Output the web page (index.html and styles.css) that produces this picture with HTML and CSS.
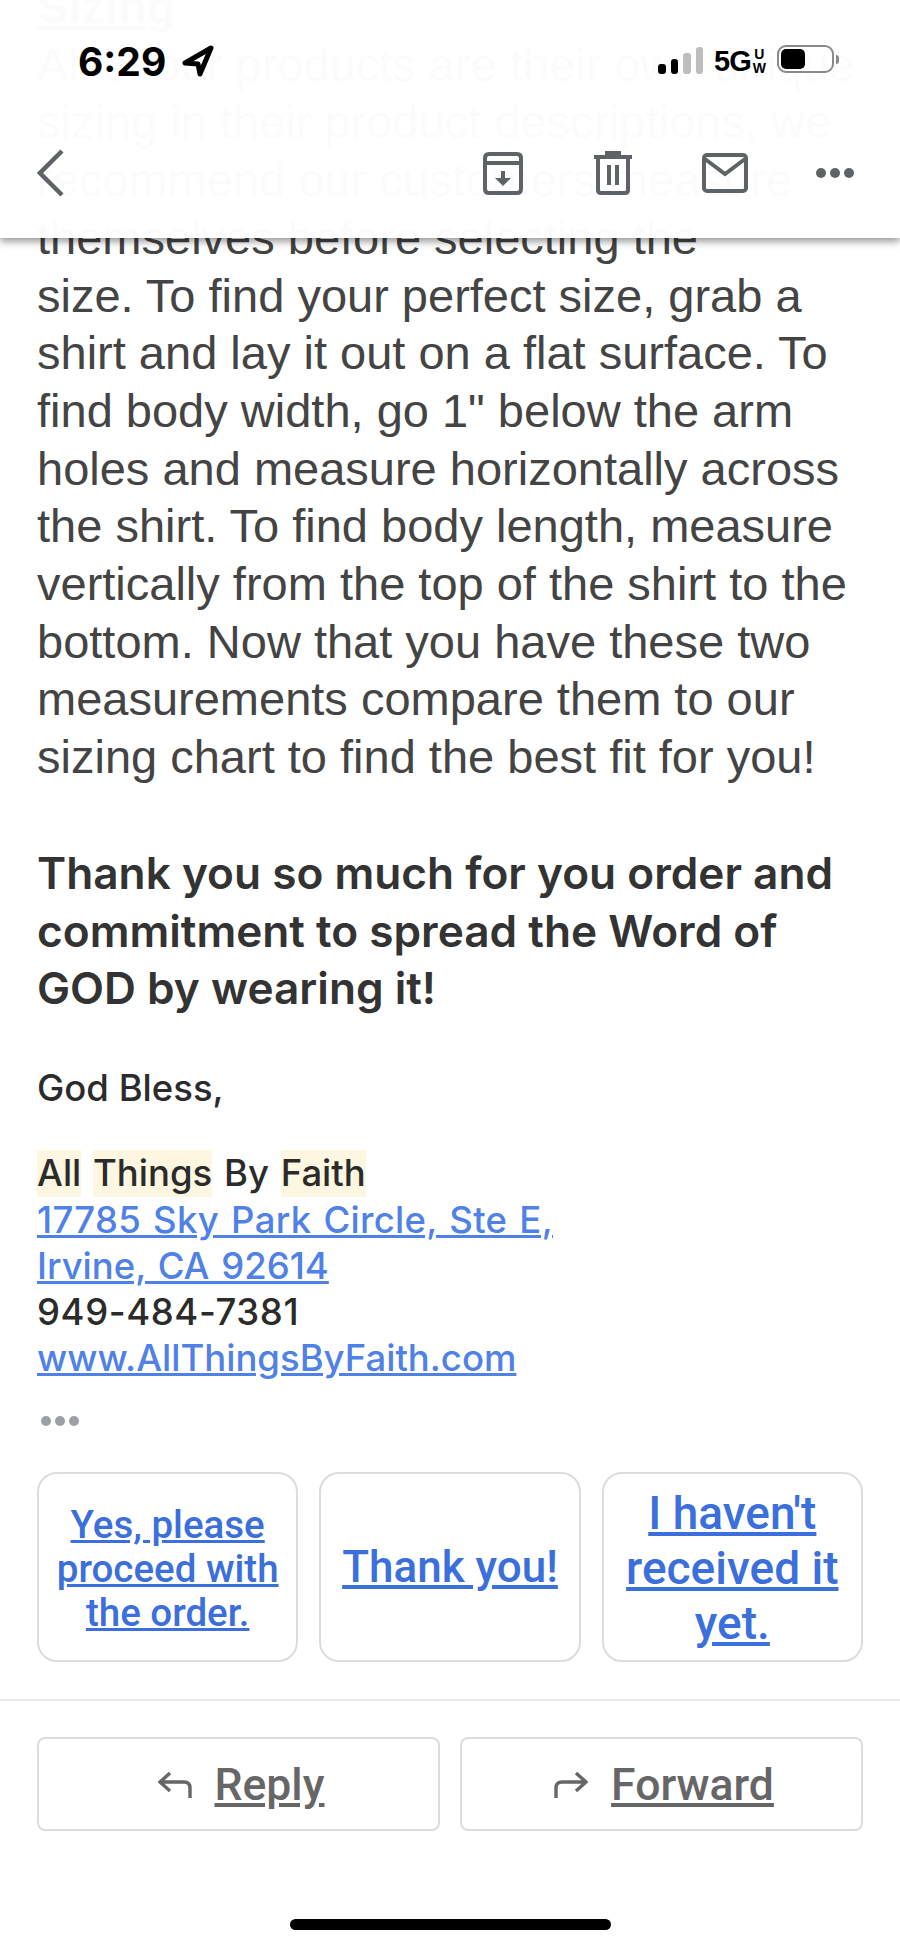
FILE: index.html
```html
<!DOCTYPE html>
<html lang="en">
<head>
    <meta charset="UTF-8">
    <meta name="viewport" content="width=device-width, initial-scale=1.0">
    <title>Order message</title>
    <link rel="stylesheet" href="styles.css">
</head>
<body>
    <div class="top-bar">
        <div class="status">
            <div class="clock">
                <span>6:29</span>
                <svg width="34" height="32" viewBox="0 0 34 32"><path d="M30 3 4 18l13 1 2 10z" fill="none" stroke="#000" stroke-width="5" stroke-linejoin="round"/></svg>
            </div>
            <div class="signal">
                <i class="bar b1"></i><i class="bar b2"></i><i class="bar b3 off"></i><i class="bar b4 off"></i>
            </div>
            <div class="net"><span class="net-5g">5G</span><span class="net-uw">U<br>W</span></div>
            <div class="battery"><div class="battery-fill"></div></div>
            <div class="battery-nub"></div>
        </div>
        <div class="toolbar">
            <svg class="back" width="28" height="48" viewBox="0 0 28 48"><path d="M25 2 3 24l22 22" fill="none" stroke="#5f6368" stroke-width="4.5"/></svg>
            <div class="tools">
                <svg width="42" height="44" viewBox="0 0 42 44" fill="none" stroke="#5f6368" stroke-width="4"><path d="M3 13V7q0-4 4-4h28q4 0 4 4v6M3 12h36v26q0 4-4 4H7q-4 0-4-4z" stroke-linejoin="round"/><path d="M21 20v10" stroke-width="4"/><path d="M13 27h16l-8 8z" fill="#5f6368" stroke="none"/></svg>
                <svg width="38" height="44" viewBox="0 0 38 44" fill="none" stroke="#5f6368" stroke-width="4"><path d="M0 6h38M13 4V2h12v2" /><path d="M4 7v32q0 3 3 3h24q3 0 3-3V7"/><path d="M15 14v20M23 14v20"/></svg>
                <svg width="46" height="40" viewBox="0 0 46 40" fill="none" stroke="#5f6368" stroke-width="4"><rect x="2" y="2" width="42" height="36" rx="3"/><path d="M3 6l20 15L43 6"/></svg>
                <div class="more"><i></i><i></i><i></i></div>
            </div>
        </div>
    </div>

    <div class="message">
        <p class="body-text">
            <a class="section-title">Sizing</a><br>
            All of our products are their own unique<br>
            sizing in their product descriptions, we<br>
            recommend our customers measure<br>
            themselves before selecting the<br>
            size. To find your perfect size, grab a<br>
            shirt and lay it out on a flat surface. To<br>
            find body width, go 1" below the arm<br>
            holes and measure horizontally across<br>
            the shirt. To find body length, measure<br>
            vertically from the top of the shirt to the<br>
            bottom. Now that you have these two<br>
            measurements compare them to our<br>
            sizing chart to find the best fit for you!
        </p>
        <p class="thanks">
            Thank you so much for you order and<br>
            commitment to spread the Word of<br>
            GOD by wearing it!
        </p>
        <p class="sign">God Bless,</p>
        <div class="sign address">
            <span class="hl">All</span> <span class="hl">Things</span> By <span class="hl">Faith</span><br>
            <a><span class="street">17785 Sky Park Circle, Ste E,</span><br>Irvine, CA 92614</a><br>
            <span class="phone">949-484-7381</span><br>
            <a>www.AllThingsByFaith.com</a>
        </div>
        <div class="trimmed"><i></i><i></i><i></i></div>
    </div>

    <div class="smart-replies">
        <div class="smart-reply small"><a>Yes, please proceed with the order.</a></div>
        <div class="smart-reply"><a>Thank you!</a></div>
        <div class="smart-reply large"><a>I haven't received it yet.</a></div>
    </div>

    <div class="actions">
        <div class="action">
            <svg width="34" height="26" viewBox="0 0 34 26" fill="none" stroke="#666" stroke-width="3.4"><path d="M12 1 2 10l10 9M2 10h24q6 0 6 6v10"/></svg>
            <a>Reply</a>
        </div>
        <div class="action">
            <svg width="34" height="26" viewBox="0 0 34 26" fill="none" stroke="#666" stroke-width="3.4"><path d="M22 1l10 9-10 9M32 10H8q-6 0-6 6v10"/></svg>
            <a>Forward</a>
        </div>
    </div>

    <div class="home-bar"></div>
</body>
</html>
```

FILE: styles.css
```css
* {
    margin: 0;
    padding: 0;
    box-sizing: border-box;
}

body {
    background: white;
    height: 1947px;
    overflow: hidden;
    font-family: "Liberation Sans", Arial, sans-serif;
    display: flex;
    flex-direction: column;
}

/* top bar sits over the scrolled mail text */
.top-bar {
    position: absolute;
    top: 0;
    left: 0;
    width: 100%;
    height: 238px;
    z-index: 2;
    background: rgba(255, 255, 255, 0.982);
    box-shadow: 0 3px 8px rgba(0, 0, 0, 0.45);
}

.status {
    display: flex;
    align-items: center;
    height: 46px;
    margin-top: 38px;
    padding-left: 78px;
}

.clock {
    display: flex;
    align-items: center;
    gap: 15px;
    width: 580px;
    font-family: Inter, sans-serif;
    font-weight: 700;
    font-size: 39px;
    color: black;
}

.signal {
    display: flex;
    align-items: flex-end;
    gap: 5px;
    height: 28px;
    width: 56px;
    margin-top: -3px;
}

.bar {
    width: 7.5px;
    border-radius: 3px;
    background: black;
}

.b1 { height: 10px; }
.b2 { height: 15px; }
.b3 { height: 21px; }
.b4 { height: 27px; }

.off {
    background: #bdbdbd;
}

.net {
    display: flex;
    align-items: center;
    justify-content: space-between;
    width: 52px;
    color: black;
    font-weight: 700;
}

.net-5g {
    font-size: 29px;
    letter-spacing: -1px;
}

.net-uw {
    font-size: 14px;
    line-height: 14px;
    text-align: center;
}

.battery {
    width: 57px;
    height: 28px;
    margin: -4px 0 0 11px;
    border: 2px solid #8a8a8a;
    border-radius: 9px;
    padding: 2px;
}

.battery-fill {
    width: 24px;
    height: 20px;
    background: black;
    border-radius: 5px;
}

.battery-nub {
    width: 3px;
    height: 9px;
    margin: -4px 0 0 2px;
    background: #8a8a8a;
    border-radius: 0 3px 3px 0;
}

.toolbar {
    display: flex;
    align-items: center;
    justify-content: space-between;
    margin-top: 65px;
    padding: 0 46px 0 37px;
    height: 48px;
}

.tools {
    display: flex;
    align-items: center;
    gap: 70px;
}

.more,
.trimmed {
    display: flex;
}

.more {
    gap: 4px;
    margin-left: -2px;
}

.more i {
    width: 10px;
    height: 10px;
    border-radius: 50%;
    background: #5f6368;
}

.message {
    margin-top: -22px;
    padding: 0 37px;
}

.body-text {
    font-size: 47px;
    line-height: 57.7px;
    color: #444;
}

.section-title {
    font-weight: 700;
    text-decoration: underline;
}

.thanks {
    margin-top: 59px;
    font-family: Inter, sans-serif;
    font-size: 44.2px;
    line-height: 57.7px;
    font-weight: 600;
    color: #333;
}

.sign {
    margin-top: 47px;
    font-family: Inter, sans-serif;
    font-size: 36.5px;
    font-weight: 500;
    line-height: 46.3px;
    color: #2b2b2b;
}

.address {
    margin-top: 39px;
    word-spacing: 2px;
}

.address a {
    color: #4f81e6;
    text-decoration: underline;
}

.street {
    letter-spacing: 0.3px;
}

.phone {
    letter-spacing: 0.6px;
}

.hl {
    display: inline-block;
    background: #fdf6e0;
}

.trimmed {
    gap: 4px;
    margin-top: 34px;
    padding-left: 4px;
}

.trimmed i {
    width: 10px;
    height: 10px;
    border-radius: 50%;
    background: #9aa0a6;
}

.smart-replies {
    display: grid;
    grid-template-columns: repeat(3, 1fr);
    gap: 21px;
    margin-top: 46px;
    padding: 0 37px;
}

.smart-reply {
    height: 190px;
    display: flex;
    align-items: center;
    justify-content: center;
    padding: 2px 10px 0;
    border: 2px solid #dadce0;
    border-radius: 20px;
    text-align: center;
    font-family: Roboto, sans-serif;
    font-weight: 500;
    font-size: 44px;
    line-height: 53px;
    color: #3b6fdb;
}

.smart-reply.small {
    padding-top: 4px;
    font-size: 38.5px;
    line-height: 44px;
}

.smart-reply.large {
    padding-top: 4px;
    font-size: 46px;
    line-height: 55px;
}

.smart-reply a,
.action a {
    text-decoration: underline;
}

.actions {
    display: grid;
    grid-template-columns: 1fr 1fr;
    gap: 20px;
    margin-top: 37px;
    padding: 36px 37px 0;
    border-top: 2px solid #e8eaed;
}

.action {
    height: 94px;
    display: flex;
    align-items: center;
    justify-content: center;
    gap: 23px;
    padding: 2px 0 0 5px;
    border: 2px solid #dadce0;
    border-radius: 8px;
    font-family: Roboto, sans-serif;
    font-weight: 500;
    font-size: 44.5px;
    color: #666;
}

.home-bar {
    width: 321px;
    height: 11px;
    margin: 88px auto 0;
    background: black;
    border-radius: 6px;
}
```
